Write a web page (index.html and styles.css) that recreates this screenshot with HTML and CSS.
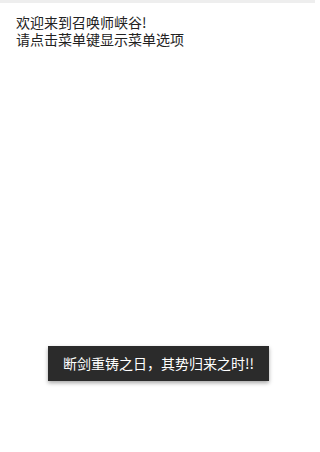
FILE: index.html
```html
<!DOCTYPE html>
<html lang="zh-CN">
<head>
<meta charset="utf-8">
<link rel="stylesheet" href="styles.css">
</head>
<body>
<div class="topbar"></div>
<main class="content">
  <p class="line">欢迎来到召唤师峡谷!</p>
  <p class="line">请点击菜单键显示菜单选项</p>
</main>
<div class="toast">断剑重铸之日，其势归来之时!!</div>
</body>
</html>
```

FILE: styles.css
```css
html, body {
  margin: 0;
  padding: 0;
  width: 315px;
  height: 452px;
  background: #ffffff;
  overflow: hidden;
  position: relative;
  font-family: "Noto Sans CJK SC", "Noto Sans", sans-serif;
}
.topbar {
  height: 3px;
  background: #eeeeee;
}
.content {
  padding: 11px 16px 0 16px;
}
.line {
  margin: 0;
  font-size: 14px;
  line-height: 17px;
  color: #222222;
}
.toast {
  position: absolute;
  left: 48px;
  top: 346px;
  width: 221px;
  height: 35px;
  box-sizing: border-box;
  background: #2b2b2b;
  color: #ffffff;
  font-size: 14px;
  line-height: 35px;
  padding: 0 0 0 15px;
  white-space: nowrap;
  box-shadow: 0 2px 4px rgba(0,0,0,0.35);
}
```
